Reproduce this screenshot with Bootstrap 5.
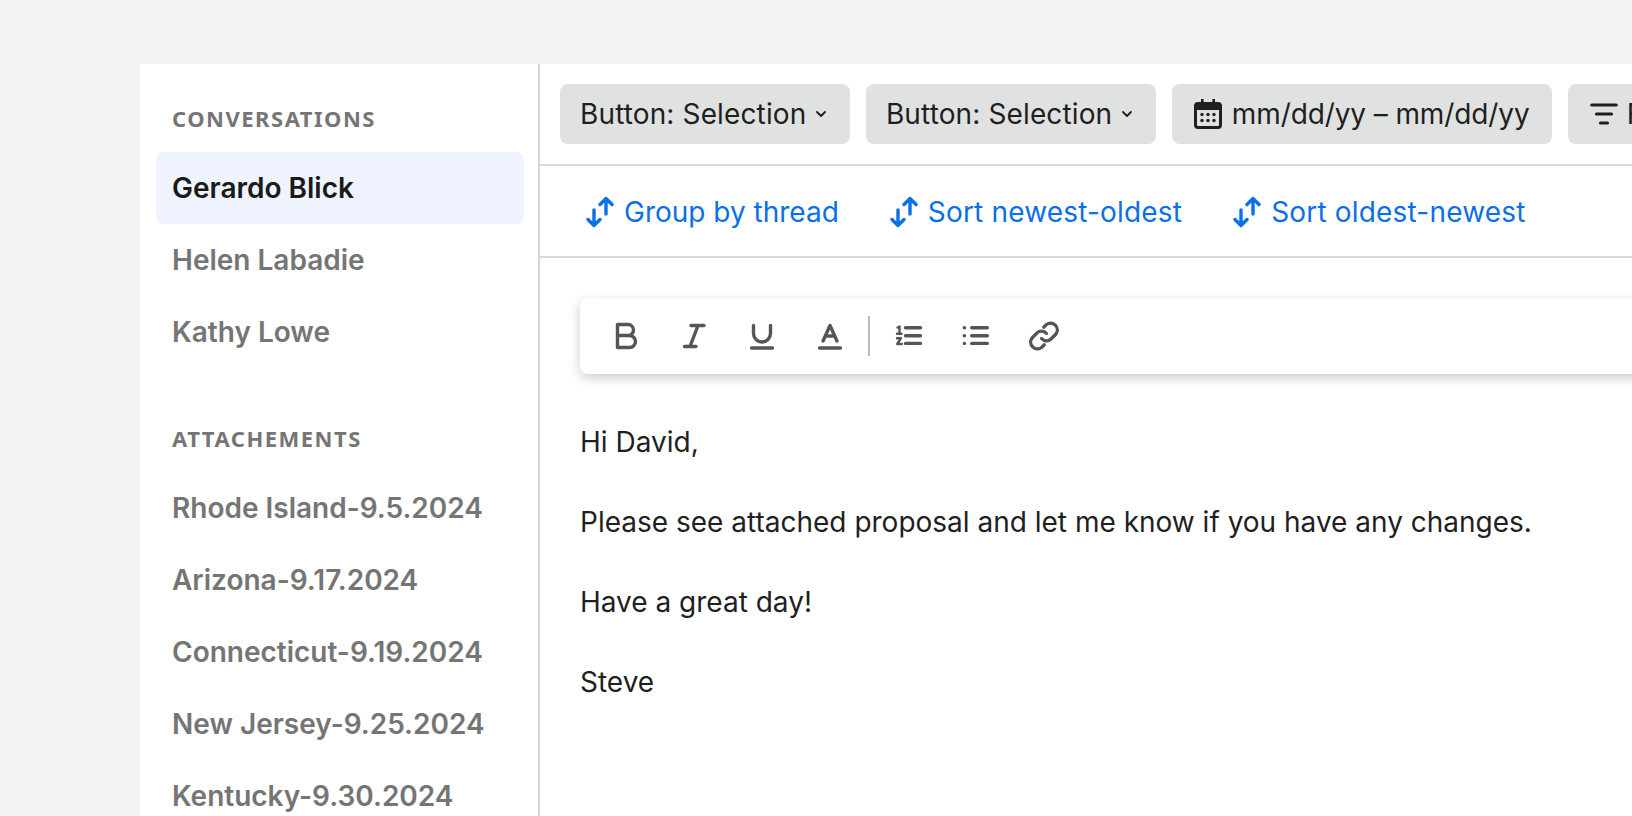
<!DOCTYPE html>
<html lang="en">
<head>
<meta charset="utf-8">
<title>Conversations</title>
<link href="https://cdn.jsdelivr.net/npm/bootstrap@5.3.0/dist/css/bootstrap.min.css" rel="stylesheet">
<style>
html,body{height:816px;overflow:hidden}
body{background:#f2f2f2;font-family:Inter,"Liberation Sans",sans-serif;color:#1f1f1f}
.stage{padding:64px 0 0 140px;height:816px;overflow:hidden}
.shell{height:752px;background:#fff;overflow:hidden}
.side{width:400px;flex:none;border-right:2px solid #d6d6d6;padding:40px 14px 0 16px}
.side-h{font-family:"Noto Sans","Open Sans",sans-serif;font-weight:700;font-size:22px;line-height:28px;letter-spacing:1.5px;color:#757575;text-transform:uppercase;padding-left:16px;margin:0}
.side-list{list-style:none;margin:20px 0 0;padding:0}
.side-gap{margin-bottom:56px}
.side-item{height:72px;line-height:72px;font-size:28px;font-weight:600;color:#757575;padding-left:16px;border-radius:8px;white-space:nowrap}
.side-item.on{background:#eff3fd;color:#1a1a1a}
.main{min-width:0;flex:1;overflow:hidden}
.bar1{height:102px;border-bottom:2px solid #d9d9d9;padding:20px 0 0 20px;gap:16px}
.pick{height:60px;background:#e0e2e1;border:0;border-radius:8px;padding:0 21.5px 0 20px;font-size:28px;letter-spacing:.13px;color:#1f1f1f;white-space:nowrap;flex:none;gap:8px}
.pick-ic{padding:0 22px;gap:10px;letter-spacing:-.1px}
.pick-fl{gap:9px}
.bar2{height:92px;border-bottom:2px solid #d9d9d9;padding:2px 0 0 46px;gap:51px}
.sort{color:#0b6fe8;font-size:28px;text-decoration:none;white-space:nowrap;gap:10px}
.sort-wide{letter-spacing:.18px}
.fmt{width:1300px;height:76px;margin:40px 0 0 40px;background:#fff;border-radius:8px;box-shadow:0 4px 12px rgba(0,0,0,.2);padding-left:30px;gap:36px}
.fmt svg{flex:none}
.sep{width:2px;height:40px;background:#b9b9b9;margin:0 -14px}
.msg{padding:28px 0 0 40px;font-size:28px;line-height:80px;color:#1f1f1f;white-space:nowrap}
.msg p{margin:0}
</style>
</head>
<body>
<div class="stage">
<div class="shell d-flex">
  <aside class="side">
    <h2 class="side-h">Conversations</h2>
    <ul class="side-list side-gap">
      <li class="side-item on">Gerardo Blick</li>
      <li class="side-item">Helen Labadie</li>
      <li class="side-item">Kathy Lowe</li>
    </ul>
    <h2 class="side-h">Attachements</h2>
    <ul class="side-list">
      <li class="side-item">Rhode Island-9.5.2024</li>
      <li class="side-item">Arizona-9.17.2024</li>
      <li class="side-item">Connecticut-9.19.2024</li>
      <li class="side-item">New Jersey-9.25.2024</li>
      <li class="side-item">Kentucky-9.30.2024</li>
    </ul>
  </aside>
  <main class="main">
    <div class="bar1 d-flex">
      <button class="pick d-flex align-items-center" type="button">Button: Selection
        <svg width="14" height="8" viewBox="0 0 14 8" fill="none" stroke="#1f1f1f" stroke-width="1.800" stroke-linecap="round" stroke-linejoin="round"><path d="M3 2l4 4 4-4"/></svg></button>
      <button class="pick d-flex align-items-center" type="button">Button: Selection
        <svg width="14" height="8" viewBox="0 0 14 8" fill="none" stroke="#1f1f1f" stroke-width="1.800" stroke-linecap="round" stroke-linejoin="round"><path d="M3 2l4 4 4-4"/></svg></button>
      <button class="pick pick-ic d-flex align-items-center" type="button">
        <svg width="28" height="30" viewBox="0 0 28 30"><path fill="#1f1f1f" d="M7 0h2.600v3h8.800V0H21v3h3a4 4 0 0 1 4 4v19a4 4 0 0 1-4 4H4a4 4 0 0 1-4-4V7a4 4 0 0 1 4-4h3zM3 11v15A1 1 0 0 0 4 27h20a1 1 0 0 0 1-1V11z"/><g fill="#1f1f1f"><circle cx="8" cy="15.500" r="1.700"/><circle cx="14" cy="15.500" r="1.700"/><circle cx="20" cy="15.500" r="1.700"/><circle cx="8" cy="21.500" r="1.700"/><circle cx="14" cy="21.500" r="1.700"/><circle cx="20" cy="21.500" r="1.700"/></g></svg>
        mm/dd/yy – mm/dd/yy</button>
      <button class="pick pick-ic pick-fl d-flex align-items-center" type="button">
        <svg width="28" height="22" viewBox="0 0 28 22" fill="none" stroke="#1f1f1f" stroke-width="3.200" stroke-linecap="round"><path d="M1.800 2h24.400M6.500 11h15M10.500 20h7"/></svg>
        Filter</button>
    </div>
    <div class="bar2 d-flex align-items-center">
      <a class="sort d-flex align-items-center" href="#"><svg width="28" height="32" viewBox="0 0 28 32" fill="none" stroke="#0b6fe8" stroke-width="3.400" stroke-linecap="round" stroke-linejoin="round"><path d="M8 14v15.500M2 23.500l6 6 6-6M20 18V2.500M14 8.500l6-6 6 6"/></svg>Group by thread</a>
      <a class="sort sort-wide d-flex align-items-center" href="#"><svg width="28" height="32" viewBox="0 0 28 32" fill="none" stroke="#0b6fe8" stroke-width="3.400" stroke-linecap="round" stroke-linejoin="round"><path d="M8 14v15.500M2 23.500l6 6 6-6M20 18V2.500M14 8.500l6-6 6 6"/></svg>Sort newest-oldest</a>
      <a class="sort sort-wide d-flex align-items-center" href="#"><svg width="28" height="32" viewBox="0 0 28 32" fill="none" stroke="#0b6fe8" stroke-width="3.400" stroke-linecap="round" stroke-linejoin="round"><path d="M8 14v15.500M2 23.500l6 6 6-6M20 18V2.500M14 8.500l6-6 6 6"/></svg>Sort oldest-newest</a>
    </div>
    <div class="fmt d-flex align-items-center">
      <svg width="32" height="32" viewBox="0 0 32 32" fill="none" stroke="#555" stroke-width="3.400" stroke-linecap="round" stroke-linejoin="round"><path d="M7.500 4.500h10.500a5.500 5.500 0 0 1 0 11H7.500zM7.500 15.500h12a6 6 0 0 1 0 12H7.500z"/></svg>
      <svg width="32" height="32" viewBox="0 0 32 32" fill="none" stroke="#555" stroke-width="3.400" stroke-linecap="round"><path d="M13 5.500h13M6.500 26.500h11.500M20 5.500L12 26.500"/></svg>
      <svg width="32" height="32" viewBox="0 0 32 32" fill="none" stroke="#555" stroke-width="3.400" stroke-linecap="round"><path d="M7.500 5.500v8a8.500 8.500 0 0 0 17 0v-8M5.500 28h21"/></svg>
      <svg width="32" height="32" viewBox="0 0 32 32" fill="none" stroke="#555" stroke-width="3.400" stroke-linecap="round" stroke-linejoin="round"><path d="M9 21l7-15.500L23 21M11.500 16h9M5.500 28h21"/></svg>
      <span class="sep"></span>
      <svg width="32" height="32" viewBox="0 0 32 32" fill="none" stroke="#555" stroke-width="3.400" stroke-linecap="round"><path d="M13.500 7.700h15M13.500 15.700h15M13.500 23.400h15"/><path stroke-width="2.400" stroke-linejoin="round" d="M5.500 7.500l2-1v7M5 13.800h4.500M5 18.200h4l-3.800 5.800h4.500"/></svg>
      <svg width="32" height="32" viewBox="0 0 32 32" fill="none" stroke="#555" stroke-width="3.400" stroke-linecap="round"><path d="M11.700 7.700h15.600M11.700 15.700h15.600M11.700 23.400h15.600M4.300 7.700h.2M4.300 15.700h.2M4.300 23.400h.2"/></svg>
      <svg width="32" height="32" viewBox="0 0 32 32" fill="none" stroke="#555" stroke-width="3.300" stroke-linecap="round" stroke-linejoin="round"><path d="M13.500 18.500a6.500 6.500 0 0 0 9.500.5l5-5a6.800 6.800 0 0 0-9.500-9.500l-2.800 2.700"/><path d="M18.500 13.500a6.500 6.500 0 0 0-9.500-.5l-5 5a6.800 6.800 0 0 0 9.500 9.500l2.800-2.700"/></svg>
    </div>
    <div class="msg">
      <p>Hi David,</p>
      <p>Please see attached proposal and let me know if you have any changes.</p>
      <p>Have a great day!</p>
      <p>Steve</p>
    </div>
  </main>
</div>
</div>
<script src="https://cdn.jsdelivr.net/npm/bootstrap@5.3.0/dist/js/bootstrap.bundle.min.js"></script>
</body>
</html>
